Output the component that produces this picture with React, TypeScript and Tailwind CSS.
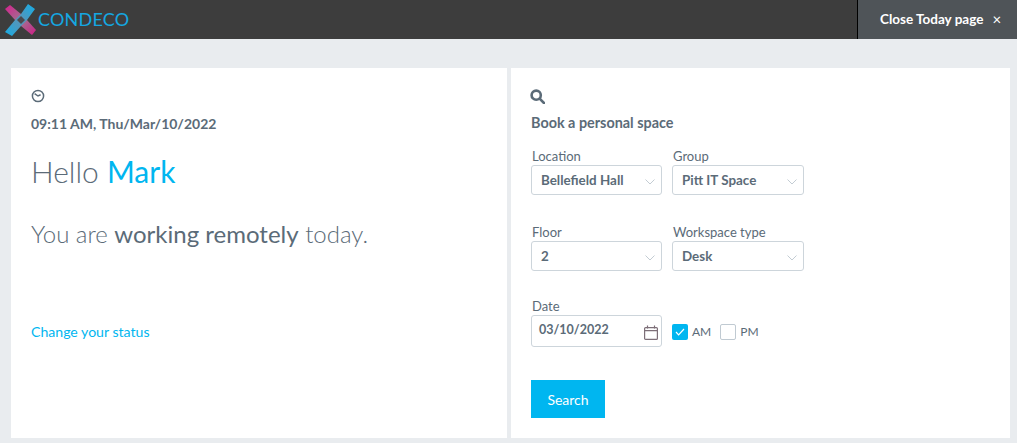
import React from 'react';

const font = "font-['Lato','Noto_Sans',sans-serif]";

const Chevron = () => (
  <svg width="10" height="6" viewBox="0 0 10 6" fill="none" className="absolute right-[6px] top-[13px]">
    <path d="M0.5 0.5L5 5L9.5 0.5" stroke="#c3ccd3" strokeWidth="1" />
  </svg>
);

const SelectField = ({ label, value, width }: { label: string; value: string; width: string }) => (
  <div className={width}>
    <div className="pl-px text-[13px] leading-[16px] text-[#5b6b78]">{label}</div>
    <div className="relative mt-[1px] h-[30px] rounded-[3px] border border-[#cdd5db] bg-white pl-[9px] text-[13.4px] font-bold leading-[28px] text-[#5b6b78]">
      {value}
      <Chevron />
    </div>
  </div>
);

const Logo = () => (
  <svg width="32" height="32" viewBox="0 0 32 32" className="shrink-0">
    <defs>
      <linearGradient id="pinkBand" x1="0" y1="0" x2="1" y2="1">
        <stop offset="0" stopColor="#d81f8e" />
        <stop offset="0.4" stopColor="#a8638f" />
        <stop offset="0.62" stopColor="#a8638f" />
        <stop offset="1" stopColor="#cf1a84" />
      </linearGradient>
      <linearGradient id="blueBand" x1="1" y1="0" x2="0" y2="1">
        <stop offset="0" stopColor="#12aee8" />
        <stop offset="0.42" stopColor="#4f97bd" />
        <stop offset="0.6" stopColor="#4f97bd" />
        <stop offset="1" stopColor="#12aee8" />
      </linearGradient>
    </defs>
    <path d="M0 5L5 1L16 10L22 16L31 26L27 31L16 22L10 16Z" fill="url(#pinkBand)" />
    <path d="M23 0L30 5L22 16L16 22L7 32L0 28L10 16L16 10Z" fill="url(#blueBand)" />
    <path d="M12 16L16 12L20 16L16 20Z" fill="#4a4a4e" />
  </svg>
);

export default function App() {
  return (
    <div className={`${font} h-[443px] w-[1017px] overflow-hidden bg-[#e9ecef]`}>
      {/* Top bar */}
      <div className="flex h-[39px] items-stretch justify-between bg-[#3d3d3d]">
        <div className="flex items-center pl-[5px]">
          <Logo />
          <span className="ml-px text-[18px] font-normal tracking-[0.2px] text-[#14a8e2]">CONDECO</span>
        </div>
        <div className="flex w-[160px] items-center border-l border-black bg-[#4f5458] pl-[22px] text-[13.5px] font-bold text-white">
          Close Today page
          <span className="ml-[9px] text-[15px] font-normal">×</span>
        </div>
      </div>

      {/* Panels */}
      <div className="mt-[29px] flex gap-[4px] pl-[11px]">
        {/* Today */}
        <div className="flex h-[370px] w-[496px] flex-col bg-white pl-[20px] pt-[21px]">
          <svg width="14" height="14" viewBox="0 0 14 14" fill="none" stroke="#5b6b78" strokeWidth="1.5">
            <circle cx="7" cy="7" r="5.6" />
            <path d="M3.6 4.6L7 7L9.6 5.8" />
          </svg>
          <div className="mt-[11px] text-[14px] font-bold leading-[20px] text-[#5b6b78]">09:11 AM, Thu/Mar/10/2022</div>
          <div className="mt-[15px] text-[30px] font-light leading-[44px] text-[#5b6b78]">
            Hello <span className="font-normal text-[#00b6f0]">Mark</span>
          </div>
          <div className="mt-[23px] text-[24px] font-light leading-[36px] text-[#5b6b78]">
            You are <span className="font-normal">working remotely</span> today.
          </div>
          <div className="mt-[70px] text-[14.1px] leading-[20px] text-[#00b6f0]">Change your status</div>
        </div>

        {/* Search */}
        <div className="h-[370px] w-[499px] bg-white pl-[20px] pt-[21px]">
          <svg width="15" height="15" viewBox="0 0 15 15" fill="none" stroke="#5b6b78" strokeWidth="2.6" className="-ml-px">
            <circle cx="6.2" cy="6.2" r="4.6" />
            <path d="M9.6 9.6L14 14" strokeLinecap="round" />
          </svg>
          <div className="mt-[9px] text-[14.4px] font-bold leading-[20px] text-[#5b6b78]">Book a personal space</div>

          <div className="mt-[15px] flex gap-[10px]">
            <SelectField label="Location" value="Bellefield Hall" width="w-[131px]" />
            <SelectField label="Group" value="Pitt IT Space" width="w-[132px]" />
          </div>
          <div className="mt-[29px] flex gap-[10px]">
            <SelectField label="Floor" value="2" width="w-[131px]" />
            <SelectField label="Workspace type" value="Desk" width="w-[132px]" />
          </div>

          <div className="mt-[27px]">
            <div className="pl-px text-[13px] leading-[16px] text-[#5b6b78]">Date</div>
            <div className="mt-px flex items-center">
              <div className="relative h-[32px] w-[131px] rounded-[3px] border border-[#cdd5db] pl-[7px] text-[12.5px] font-bold leading-[28px] text-[#5b6b78]">
                03/10/2022
                <svg width="14" height="15" viewBox="0 0 14 15" fill="none" stroke="#7d6f78" strokeWidth="1.2" className="absolute right-[3px] top-[9px]">
                  <rect x="0.6" y="2.6" width="12.8" height="11.8" rx="1" />
                  <path d="M0.6 5.6H13.4M3.5 0.5V3.5M10.5 0.5V3.5" />
                </svg>
              </div>
              <div className="mt-[2px] flex items-center">
                <div className="ml-[10px] flex h-[16px] w-[16px] items-center justify-center rounded-[2px] bg-[#00b6f0]">
                  <svg width="10" height="8" viewBox="0 0 10 8" fill="none" stroke="white" strokeWidth="1.2">
                    <path d="M1 4L3.6 6.8L9 1" />
                  </svg>
                </div>
                <span className="ml-[4px] text-[12px] text-[#5b6b78]">AM</span>
                <div className="ml-[9px] h-[16px] w-[16px] rounded-[2px] border border-[#c0cad2]" />
                <span className="ml-[4px] text-[12px] text-[#5b6b78]">PM</span>
              </div>
            </div>
          </div>

          <div className="mt-[33px] flex h-[38px] w-[74px] items-center justify-center bg-[#00b6f0] text-[14px] text-white">Search</div>
        </div>
      </div>
    </div>
  );
}
